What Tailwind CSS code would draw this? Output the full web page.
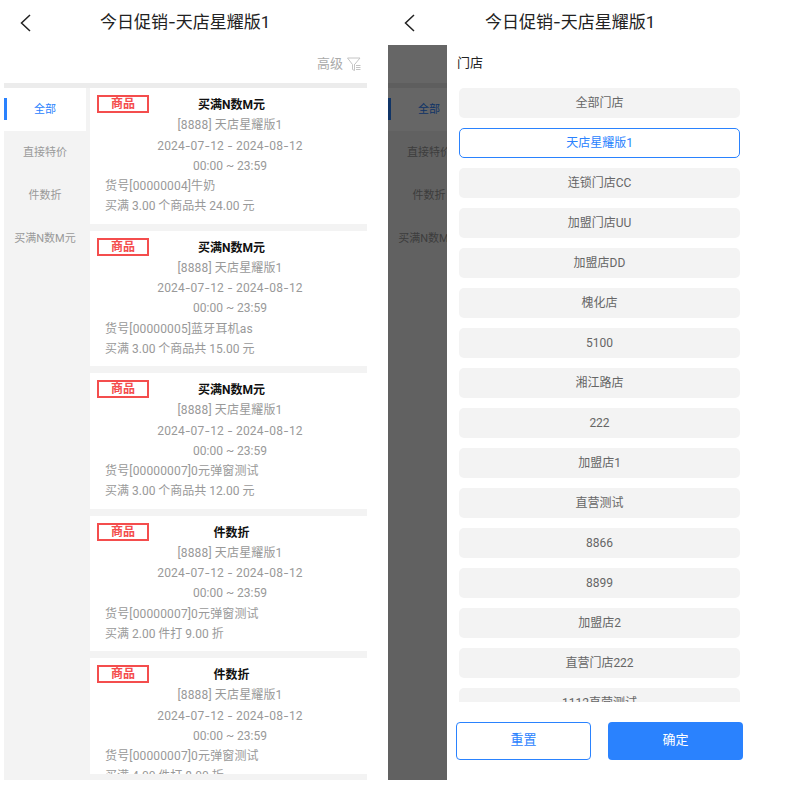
<!doctype html>
<html><head><meta charset="utf-8"><script src="https://cdn.jsdelivr.net/npm/@tailwindcss/browser@4"></script></head>
<body class="bg-white">
<div class="flex w-[785px] h-[785px] overflow-hidden bg-white font-['Roboto','Noto_Sans_CJK_SC',sans-serif]">
  <!-- left -->
  <div class="w-[388px] shrink-0 flex flex-col">
    <div class="h-[45px] flex items-center relative pl-[20px]">
      <svg width="11" height="18" viewBox="0 0 11 18" fill="none" stroke="#222" stroke-width="1.5"><path d="M10 1 L1.5 9 L10 17"/></svg>
      <span class="ml-[69px] text-[17px] leading-none text-[#222]">今日促销<span class="font-['Inter']">-</span>天店星耀版1</span>
    </div>
    <div class="h-[38px] flex items-center justify-end w-[361px] gap-[4px] text-[13px] text-[#aaa]">
      <span>高级</span>
      <svg width="14" height="14" viewBox="0 0 14 14" fill="none" stroke="#c4c4c4" stroke-width="1"><path d="M0.5 1 H13 L8 7 M0.5 1 L5.5 7.5 V12.5 L7.5 13.5 V7"/><path d="M9 8.5 H13.5 M9 10.5 H13.5 M9 12.5 H13.5"/></svg>
    </div>
    <div class="ml-1 w-[363px] h-[5px] bg-[#ececec]"></div>
    <div class="ml-1 w-[363px] h-[692px] bg-[#f3f3f3] flex overflow-hidden">
      <div class="w-[82px] shrink-0 text-[11px] text-[#999] text-center">
        <div class="h-[43px] pt-[2px] bg-white text-[#2a82fe] flex items-center justify-center relative"><span class="absolute left-0 top-[10px] w-[3px] h-[22px] bg-[#2a82fe]"></span>全部</div>
        <div class="h-[43px] pt-[2px] flex items-center justify-center">直接特价</div>
        <div class="h-[43px] pt-[2px] flex items-center justify-center">件数折</div>
        <div class="h-[43px] pt-[2px] flex items-center justify-center">买满N数M元</div>
      </div>
      <div class="ml-1 w-[277px] h-[686px] overflow-hidden flex flex-col gap-[7px] text-[12px] leading-[20.3px] text-[#999]">
        <div class="relative shrink-0 h-[135.5px] bg-white pt-[7px]">
          <span class="absolute left-[7px] top-[7px] w-[52px] h-[18px] border-2 border-[#f44d4d] text-[#f44d4d] font-bold leading-[14px] text-center">商品</span>
          <div class="text-center pl-[6px] font-bold text-[#111]">买满N数M元</div>
          <div class="text-center pl-[3px] tracking-[0.15px]">[8888] 天店星耀版1</div>
          <div class="text-center pl-[3px] tracking-[0.17px]">2024<span class="font-['Inter']">-</span>07<span class="font-['Inter']">-</span>12 <span class="font-['Inter']">-</span> 2024<span class="font-['Inter']">-</span>08<span class="font-['Inter']">-</span>12</div>
          <div class="text-center pl-[3px]">00:00 ~ 23:59</div>
          <div class="pl-[15px] tracking-[0.15px]">货号[00000004]牛奶</div>
          <div class="pl-[15px]">买满 3.00 个商品共 24.00 元</div>
        </div>
        <div class="relative shrink-0 h-[135.5px] bg-white pt-[7px]">
          <span class="absolute left-[7px] top-[7px] w-[52px] h-[18px] border-2 border-[#f44d4d] text-[#f44d4d] font-bold leading-[14px] text-center">商品</span>
          <div class="text-center pl-[6px] font-bold text-[#111]">买满N数M元</div>
          <div class="text-center pl-[3px] tracking-[0.15px]">[8888] 天店星耀版1</div>
          <div class="text-center pl-[3px] tracking-[0.17px]">2024<span class="font-['Inter']">-</span>07<span class="font-['Inter']">-</span>12 <span class="font-['Inter']">-</span> 2024<span class="font-['Inter']">-</span>08<span class="font-['Inter']">-</span>12</div>
          <div class="text-center pl-[3px]">00:00 ~ 23:59</div>
          <div class="pl-[15px] tracking-[0.15px]">货号[00000005]蓝牙耳机as</div>
          <div class="pl-[15px]">买满 3.00 个商品共 15.00 元</div>
        </div>
        <div class="relative shrink-0 h-[135.5px] bg-white pt-[7px]">
          <span class="absolute left-[7px] top-[7px] w-[52px] h-[18px] border-2 border-[#f44d4d] text-[#f44d4d] font-bold leading-[14px] text-center">商品</span>
          <div class="text-center pl-[6px] font-bold text-[#111]">买满N数M元</div>
          <div class="text-center pl-[3px] tracking-[0.15px]">[8888] 天店星耀版1</div>
          <div class="text-center pl-[3px] tracking-[0.17px]">2024<span class="font-['Inter']">-</span>07<span class="font-['Inter']">-</span>12 <span class="font-['Inter']">-</span> 2024<span class="font-['Inter']">-</span>08<span class="font-['Inter']">-</span>12</div>
          <div class="text-center pl-[3px]">00:00 ~ 23:59</div>
          <div class="pl-[15px] tracking-[0.15px]">货号[00000007]0元弹窗测试</div>
          <div class="pl-[15px]">买满 3.00 个商品共 12.00 元</div>
        </div>
        <div class="relative shrink-0 h-[135.5px] bg-white pt-[7px]">
          <span class="absolute left-[7px] top-[7px] w-[52px] h-[18px] border-2 border-[#f44d4d] text-[#f44d4d] font-bold leading-[14px] text-center">商品</span>
          <div class="text-center pl-[6px] font-bold text-[#111]">件数折</div>
          <div class="text-center pl-[3px] tracking-[0.15px]">[8888] 天店星耀版1</div>
          <div class="text-center pl-[3px] tracking-[0.17px]">2024<span class="font-['Inter']">-</span>07<span class="font-['Inter']">-</span>12 <span class="font-['Inter']">-</span> 2024<span class="font-['Inter']">-</span>08<span class="font-['Inter']">-</span>12</div>
          <div class="text-center pl-[3px]">00:00 ~ 23:59</div>
          <div class="pl-[15px] tracking-[0.15px]">货号[00000007]0元弹窗测试</div>
          <div class="pl-[15px]">买满 2.00 件打 9.00 折</div>
        </div>
        <div class="relative shrink-0 h-[135.5px] bg-white pt-[7px]">
          <span class="absolute left-[7px] top-[7px] w-[52px] h-[18px] border-2 border-[#f44d4d] text-[#f44d4d] font-bold leading-[14px] text-center">商品</span>
          <div class="text-center pl-[6px] font-bold text-[#111]">件数折</div>
          <div class="text-center pl-[3px] tracking-[0.15px]">[8888] 天店星耀版1</div>
          <div class="text-center pl-[3px] tracking-[0.17px]">2024<span class="font-['Inter']">-</span>07<span class="font-['Inter']">-</span>12 <span class="font-['Inter']">-</span> 2024<span class="font-['Inter']">-</span>08<span class="font-['Inter']">-</span>12</div>
          <div class="text-center pl-[3px]">00:00 ~ 23:59</div>
          <div class="pl-[15px] tracking-[0.15px]">货号[00000007]0元弹窗测试</div>
          <div class="pl-[15px]">买满 4.00 件打 8.00 折</div>
        </div>
      </div>
    </div>
  </div>
  <!-- right -->
  <div class="flex-1 flex flex-col min-w-0">
    <div class="h-[45px] shrink-0 flex items-center pl-[16px]">
      <svg width="11" height="18" viewBox="0 0 11 18" fill="none" stroke="#222" stroke-width="1.5"><path d="M10 1 L1.5 9 L10 17"/></svg>
      <span class="ml-[70px] text-[17px] leading-none text-[#222]">今日促销<span class="font-['Inter']">-</span>天店星耀版1</span>
    </div>
    <div class="relative w-[397px] h-[735px] flex bg-white">
      <!-- dimmed page -->
      <div class="w-[59px] shrink-0 h-full relative overflow-hidden">
        <div class="pt-[38px]">
          <div class="h-[5px] bg-[#ececec]"></div>
          <div class="h-[692px] bg-[#f3f3f3] text-[11px] text-[#999] w-[82px]">
            <div class="h-[43px] pt-[2px] bg-white text-[#2a82fe] flex items-center justify-center relative"><span class="absolute left-0 top-[10px] w-[3px] h-[22px] bg-[#2a82fe]"></span>全部</div>
            <div class="h-[43px] pt-[2px] flex items-center justify-center">直接特价</div>
            <div class="h-[43px] pt-[2px] flex items-center justify-center">件数折</div>
            <div class="h-[43px] pt-[2px] flex items-center justify-center">买满N数M元</div>
          </div>
        </div>
        <div class="absolute inset-0 bg-black/60"></div>
      </div>
      <!-- drawer -->
      <div class="flex-1 bg-white flex flex-col">
        <div class="h-[43px] pl-[10px] pb-[8px] flex items-center text-[13px] text-[#222]">门店</div>
        <div class="h-[614px] ml-[12px] w-[281px] overflow-hidden flex flex-col gap-[10px] text-[12px] text-[#666] text-center">
          <div class="h-[30px] shrink-0 rounded-[5px] bg-[#f3f3f3] leading-[30px]">全部门店</div>
          <div class="h-[30px] shrink-0 rounded-[5px] bg-white border border-[#2a82fe] text-[#2a82fe] leading-[28px]">天店星耀版1</div>
          <div class="h-[30px] shrink-0 rounded-[5px] bg-[#f3f3f3] leading-[30px]">连锁门店CC</div>
          <div class="h-[30px] shrink-0 rounded-[5px] bg-[#f3f3f3] leading-[30px]">加盟门店UU</div>
          <div class="h-[30px] shrink-0 rounded-[5px] bg-[#f3f3f3] leading-[30px]">加盟店DD</div>
          <div class="h-[30px] shrink-0 rounded-[5px] bg-[#f3f3f3] leading-[30px]">槐化店</div>
          <div class="h-[30px] shrink-0 rounded-[5px] bg-[#f3f3f3] leading-[30px]">5100</div>
          <div class="h-[30px] shrink-0 rounded-[5px] bg-[#f3f3f3] leading-[30px]">湘江路店</div>
          <div class="h-[30px] shrink-0 rounded-[5px] bg-[#f3f3f3] leading-[30px]">222</div>
          <div class="h-[30px] shrink-0 rounded-[5px] bg-[#f3f3f3] leading-[30px]">加盟店1</div>
          <div class="h-[30px] shrink-0 rounded-[5px] bg-[#f3f3f3] leading-[30px]">直营测试</div>
          <div class="h-[30px] shrink-0 rounded-[5px] bg-[#f3f3f3] leading-[30px]">8866</div>
          <div class="h-[30px] shrink-0 rounded-[5px] bg-[#f3f3f3] leading-[30px]">8899</div>
          <div class="h-[30px] shrink-0 rounded-[5px] bg-[#f3f3f3] leading-[30px]">加盟店2</div>
          <div class="h-[30px] shrink-0 rounded-[5px] bg-[#f3f3f3] leading-[30px]">直营门店222</div>
          <div class="h-[30px] shrink-0 rounded-[5px] bg-[#f3f3f3] leading-[30px]">1112直营测试</div>
        </div>
        <div class="mt-[20px] ml-[9px] flex gap-[17px] text-[13px]">
          <div class="w-[135px] h-[38px] rounded-[4px] border border-[#2a82fe] text-[#2a82fe] bg-white text-center leading-[34px]">重置</div>
          <div class="w-[135px] h-[38px] rounded-[4px] bg-[#2a82fe] text-white text-center leading-[36px]">确定</div>
        </div>
      </div>
    </div>
  </div>
</div>
</body></html>
